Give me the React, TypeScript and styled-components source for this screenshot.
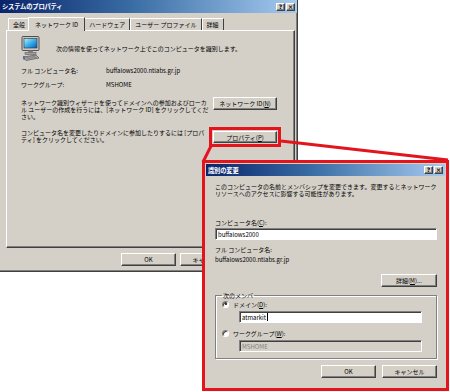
import React from "react";
import styled, { createGlobalStyle, css } from "styled-components";

const FACE = "#d4d0c8";
const RED = "#e3141c";

const GlobalStyle = createGlobalStyle`
  html, body {
    margin: 0;
    padding: 0;
    background: #ffffff;
  }
  * {
    box-sizing: border-box;
  }
`;

const raised = css`
  border: 1px solid;
  border-color: #ffffff #404040 #404040 #ffffff;
  box-shadow: inset -1px -1px 0 #808080;
`;

const sunken = css`
  border: 1px solid;
  border-color: #808080 #ffffff #ffffff #808080;
  box-shadow: inset 1px 1px 0 #404040;
`;

const Stage = styled.div`
  position: relative;
  width: 450px;
  height: 392px;
  overflow: hidden;
  background: #ffffff;
  font-family: "Noto Sans CJK JP", "Noto Sans", sans-serif;
  font-size: 6px;
  line-height: 7px;
  color: #000000;
`;

const MainWindow = styled.div`
  width: 298px;
  height: 272px;
  background: ${FACE};
  display: flex;
  flex-direction: column;
  border-right: 1px solid #404040;
  border-bottom: 1px solid #404040;
  box-shadow: inset -1px -1px 0 #808080;
`;

const TitleBar = styled.div<{ $h: number }>`
  height: ${(p) => p.$h}px;
  flex: none;
  display: flex;
  align-items: center;
  justify-content: space-between;
  padding: 0 2px 0 2px;
  background: linear-gradient(90deg, #0a246a 0%, #3a6ea5 45%, #a6caf0 100%);
  color: #ffffff;
  font-weight: bold;
  font-size: 6.3px;
  letter-spacing: -0.2px;
`;

const CaptionButtons = styled.div`
  display: flex;
  gap: 1px;
`;

const CaptionButton = styled.div`
  width: 9px;
  height: 8px;
  background: ${FACE};
  ${raised};
  color: #000000;
  font-family: "DejaVu Sans", sans-serif;
  font-weight: bold;
  font-size: 6px;
  line-height: 6px;
  display: flex;
  align-items: center;
  justify-content: center;
`;

const MainBody = styled.div`
  flex: 1;
  display: flex;
  flex-direction: column;
  padding: 3px 2px 0 6px;
`;

const TabRow = styled.div`
  height: 14px;
  display: flex;
  align-items: flex-end;
  padding-left: 2px;
`;

const Tab = styled.div<{ $active?: boolean }>`
  height: ${(p) => (p.$active ? 14 : 12)}px;
  padding: 0 ${(p) => (p.$active ? 6 : 4)}px;
  margin-left: ${(p) => (p.$active ? -2 : 0)}px;
  margin-right: ${(p) => (p.$active ? -1 : 0)}px;
  display: flex;
  align-items: center;
  white-space: nowrap;
  background: ${FACE};
  border-top: 1px solid #ffffff;
  border-left: 1px solid #ffffff;
  border-right: 1px solid #404040;
  position: relative;
  z-index: ${(p) => (p.$active ? 1 : 0)};
  margin-bottom: ${(p) => (p.$active ? -1 : 0)}px;
`;

const Panel = styled.div`
  height: 218px;
  display: flex;
  flex-direction: column;
  border: 1px solid;
  border-color: #ffffff #404040 #404040 #ffffff;
  box-shadow: inset -1px -1px 0 #808080;
  padding: 5px 17px 0 14px;
`;

const IntroRow = styled.div`
  display: flex;
  align-items: center;
  gap: 16px;
  height: 25px;
`;

const InfoGrid = styled.div`
  margin-top: 2px;
  display: grid;
  grid-template-columns: 85px 1fr;
  grid-auto-rows: 14px;
  align-items: center;
`;

const ActionRow = styled.div<{ $top: number }>`
  margin-top: ${(p) => p.$top}px;
  display: flex;
  justify-content: space-between;
  align-items: flex-start;
`;

const ActionText = styled.div<{ $pad: number }>`
  padding-top: ${(p) => p.$pad}px;
  white-space: nowrap;
`;

const Button = styled.div<{ $w: number; $h?: number }>`
  width: ${(p) => p.$w}px;
  height: ${(p) => p.$h ?? 13}px;
  flex: none;
  background: ${FACE};
  ${raised};
  display: flex;
  align-items: center;
  justify-content: center;
  white-space: nowrap;
`;

const Highlight = styled.div`
  flex: none;
  margin-top: 2px;
  outline: 3px solid ${RED};
  outline-offset: 1px;
`;

const Footer = styled.div`
  display: flex;
  justify-content: flex-end;
  gap: 4px;
  padding: 5px 60px 0 0;
`;

const Callout = styled.div`
  position: absolute;
  left: 202px;
  top: 160px;
  width: 247px;
  height: 231px;
  border: 3px solid ${RED};
  background: ${FACE};
  display: flex;
  flex-direction: column;
  padding: 1px;
`;

const Connector = styled.svg`
  position: absolute;
  left: 0;
  top: 0;
  pointer-events: none;
`;

const SubBody = styled.div`
  flex: 1;
  display: flex;
  flex-direction: column;
  padding: 0 8px 0 9px;
`;

const Line = styled.div<{ $top?: number }>`
  margin-top: ${(p) => p.$top ?? 0}px;
  white-space: nowrap;
`;

const TextBox = styled.div<{ $disabled?: boolean; $top?: number }>`
  margin-top: ${(p) => p.$top ?? 0}px;
  height: 12px;
  ${sunken};
  background: ${(p) => (p.$disabled ? FACE : "#ffffff")};
  color: ${(p) => (p.$disabled ? "#808080" : "#000000")};
  display: flex;
  align-items: center;
  padding-left: 2px;
  white-space: nowrap;
`;

const Caret = styled.span`
  display: inline-block;
  width: 1px;
  height: 8px;
  background: #000000;
  margin-left: 1px;
`;

const RightRow = styled.div<{ $top: number }>`
  margin-top: ${(p) => p.$top}px;
  display: flex;
  justify-content: flex-end;
  gap: 6px;
`;

const GroupBox = styled.fieldset`
  margin: 5px 0 0 0;
  padding: 0 10px 6px 6px;
  border: 1px solid #808080;
  box-shadow: 1px 1px 0 #ffffff, inset 1px 1px 0 #ffffff;
  min-width: 0;
  display: flex;
  flex-direction: column;
`;

const Legend = styled.legend`
  padding: 0 1px;
  margin-left: 0;
  font-size: 6px;
  line-height: 7px;
`;

const RadioRow = styled.div<{ $top?: number }>`
  margin-top: ${(p) => p.$top ?? 0}px;
  display: flex;
  align-items: center;
  gap: 4px;
  height: 8px;
  white-space: nowrap;
`;

const Radio = styled.span<{ $on?: boolean }>`
  width: 7px;
  height: 7px;
  border-radius: 50%;
  background: #ffffff;
  border: 1px solid;
  border-color: #808080 #ffffff #ffffff #808080;
  box-shadow: inset 1px 1px 0 #404040;
  display: flex;
  align-items: center;
  justify-content: center;
  &::after {
    content: "";
    width: 2px;
    height: 2px;
    border-radius: 50%;
    background: ${(p) => (p.$on ? "#000000" : "transparent")};
  }
`;

const Indented = styled.div`
  padding-left: 17px;
  padding-right: 4px;
`;

const Accel = styled.span`
  text-decoration: underline;
`;

function ComputerIcon() {
  return (
    <svg width="19" height="25" viewBox="0 0 19 25">
      <defs>
        <linearGradient id="scr" x1="0" y1="0" x2="1" y2="1">
          <stop offset="0" stopColor="#b8f0ff" />
          <stop offset="0.5" stopColor="#38b0e8" />
          <stop offset="1" stopColor="#0a58b8" />
        </linearGradient>
      </defs>
      <rect x="1" y="0.5" width="17" height="14" rx="1" fill="#c8c8c8" stroke="#505050" />
      <rect x="3" y="2.5" width="13" height="9.5" fill="url(#scr)" stroke="#303030" strokeWidth="0.6" />
      <rect x="7" y="14.5" width="5" height="2" fill="#808080" />
      <rect x="4" y="16.5" width="11" height="2" fill="#a0a0a0" stroke="#505050" strokeWidth="0.5" />
      <path d="M2 21 L15 19 L18 22 L5 24.5 Z" fill="#b0b0b0" stroke="#404040" strokeWidth="0.6" />
      <path d="M4 21.8 L14.5 20.2 M5 23 L16 21.2" stroke="#606060" strokeWidth="0.5" />
      <path d="M3 20 L3 24" stroke="#3050a0" strokeWidth="1" />
    </svg>
  );
}

export default function App() {
  return (
    <Stage>
      <GlobalStyle />
      <MainWindow>
        <TitleBar $h={13}>
          <span>システムのプロパティ</span>
          <CaptionButtons>
            <CaptionButton>?</CaptionButton>
            <CaptionButton>×</CaptionButton>
          </CaptionButtons>
        </TitleBar>
        <MainBody>
          <TabRow>
            <Tab>全般</Tab>
            <Tab $active>ネットワーク ID</Tab>
            <Tab>ハードウェア</Tab>
            <Tab>ユーザー プロファイル</Tab>
            <Tab>詳細</Tab>
          </TabRow>
          <Panel>
            <IntroRow>
              <ComputerIcon />
              <span>次の情報を使ってネットワーク上でこのコンピュータを識別します。</span>
            </IntroRow>
            <InfoGrid>
              <span>フル コンピュータ名:</span>
              <span>buffalows2000.ntlabs.gr.jp</span>
              <span>ワークグループ:</span>
              <span>MSHOME</span>
            </InfoGrid>
            <ActionRow $top={6}>
              <ActionText $pad={2}>
                ネットワーク識別ウィザードを使ってドメインへの参加およびローカ
                <br />
                ル ユーザーの作成を行うには、[ネットワーク ID] をクリックしてくだ
                <br />
                さい。
              </ActionText>
              <Button $w={64}>
                ネットワーク ID(<Accel>N</Accel>)
              </Button>
            </ActionRow>
            <ActionRow $top={9}>
              <ActionText $pad={0}>
                コンピュータ名を変更したりドメインに参加したりするには [プロパ
                <br />
                ティ] をクリックしてください。
              </ActionText>
              <Highlight>
                <Button $w={64} $h={12}>
                  プロパティ(<Accel>P</Accel>)
                </Button>
              </Highlight>
            </ActionRow>
          </Panel>
          <Footer>
            <Button $w={55}>OK</Button>
            <Button $w={55}>キャンセル</Button>
          </Footer>
        </MainBody>
      </MainWindow>

      <Connector width="450" height="392">
        <line x1="211" y1="146" x2="203" y2="162" stroke={RED} strokeWidth="3" />
        <line x1="281" y1="141" x2="448" y2="160" stroke={RED} strokeWidth="3" />
      </Connector>

      <Callout>
        <TitleBar $h={12}>
          <span>識別の変更</span>
          <CaptionButtons>
            <CaptionButton>?</CaptionButton>
            <CaptionButton>×</CaptionButton>
          </CaptionButtons>
        </TitleBar>
        <SubBody>
          <Line $top={7}>
            このコンピュータの名前とメンバシップを変更できます。変更するとネットワーク
          </Line>
          <Line>リソースへのアクセスに影響する可能性があります。</Line>
          <Line $top={22}>
            コンピュータ名(<Accel>C</Accel>):
          </Line>
          <TextBox $top={2}>buffalows2000</TextBox>
          <Line $top={6}>フル コンピュータ名:</Line>
          <Line $top={3}>buffalows2000.ntlabs.gr.jp</Line>
          <RightRow $top={11}>
            <Button $w={56}>
              詳細(<Accel>M</Accel>)...
            </Button>
          </RightRow>
          <GroupBox>
            <Legend>次のメンバ</Legend>
            <RadioRow $top={1}>
              <Radio $on />
              <span>
                ドメイン(<Accel>D</Accel>):
              </span>
            </RadioRow>
            <Indented>
              <TextBox $top={3}>
                atmarkit
                <Caret />
              </TextBox>
            </Indented>
            <RadioRow $top={6}>
              <Radio />
              <span>
                ワークグループ(<Accel>W</Accel>):
              </span>
            </RadioRow>
            <Indented>
              <TextBox $top={3} $disabled>
                MSHOME
              </TextBox>
            </Indented>
          </GroupBox>
          <RightRow $top={6}>
            <Button $w={55}>OK</Button>
            <Button $w={55}>キャンセル</Button>
          </RightRow>
        </SubBody>
      </Callout>
    </Stage>
  );
}
